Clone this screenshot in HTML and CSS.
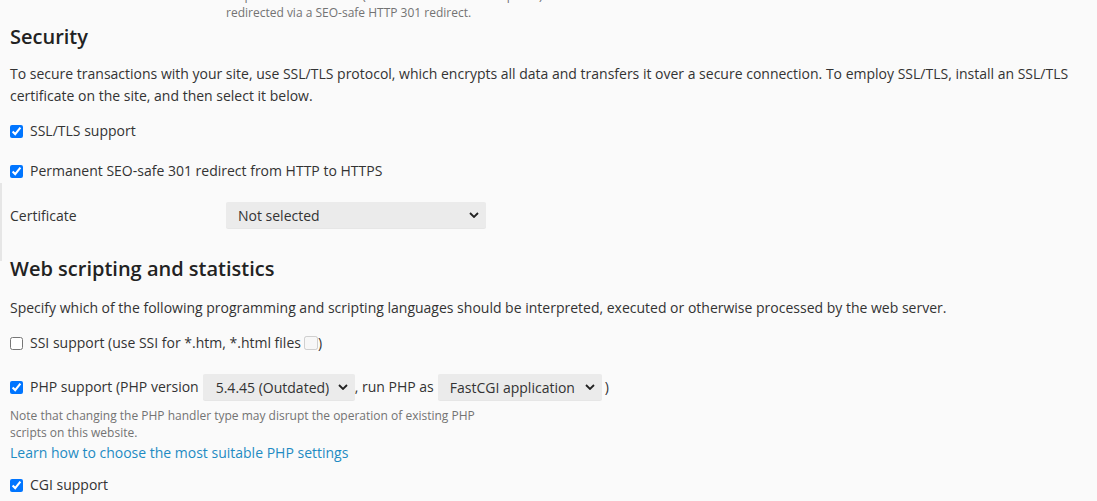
FILE: index.html
```html
<!DOCTYPE html>
<html lang="en">
<head>
  <meta charset="UTF-8" />
  <meta name="viewport" content="width=device-width, initial-scale=1.0"/>
  <title>Hosting settings</title>
  <link rel="stylesheet" href="styles.css">
</head>
<body>
  <div class="page">
    <div class="row-hint">
      <div class="field-hint top-hint">Requests to the domain (with or without the www prefix)<br>redirected via a SEO-safe HTTP 301 redirect.</div>
    </div>

    <section class="block security">
      <h2>Security</h2>
      <p class="intro">To secure transactions with your site, use SSL/TLS protocol, which encrypts all data and transfers it over a secure connection. To employ SSL/TLS, install an SSL/TLS certificate on the site, and then select it below.</p>

      <label class="check ssl-row"><input type="checkbox" checked> SSL/TLS support</label>
      <label class="check redirect-row"><input type="checkbox" checked> Permanent SEO-safe 301 redirect from HTTP to HTTPS</label>

      <div class="form-row cert-row">
        <span class="form-label">Certificate</span>
        <select class="sel cert-select">
          <option>Not selected</option>
        </select>
      </div>
    </section>

    <section class="block scripting">
      <h2>Web scripting and statistics</h2>
      <p class="intro single">Specify which of the following programming and scripting languages should be interpreted, executed or otherwise processed by the web server.</p>

      <label class="check ssi-row"><input type="checkbox"> SSI support (use SSI for *.htm, *.html files <input type="checkbox" class="tiny" disabled> )</label>

      <div class="check php-row">
        <input type="checkbox" checked>
        <span>PHP support (PHP version</span>
        <select class="sel php-version">
          <option>5.4.45 (Outdated)</option>
        </select>
        <span class="tight">, run PHP as</span>
        <select class="sel php-handler">
          <option>FastCGI application</option>
        </select>
        <span>)</span>
      </div>
      <div class="field-hint php-hint">Note that changing the PHP handler type may disrupt the operation of existing PHP<br>scripts on this website.</div>
      <a class="help-link" href="#">Learn how to choose the most suitable PHP settings</a>

      <label class="check cgi-row"><input type="checkbox" checked> CGI support</label>
    </section>
  </div>
</body>
</html>
```

FILE: styles.css
```css
body {
  font-family: 'Open Sans', 'Liberation Sans', sans-serif;
  margin: 0;
  background: #fafafa;
  color: #333;
  font-size: 14px;
  overflow: hidden;
}
.page {
  padding: 0 10px;
}
.row-hint {
  padding-left: 216px;
  margin-top: -13px;
}
.field-hint {
  font-size: 12px;
  line-height: 17px;
  color: #737373;
}
h2 {
  font-size: 20px;
  font-weight: 600;
  line-height: 24px;
  color: #222;
  margin: 0;
}
.security {
  margin-top: 4px;
}
.intro {
  line-height: 22px;
  margin: 14px 0 0;
}
.check {
  display: flex;
  align-items: center;
  line-height: 20px;
}
.check input {
  width: 13px;
  height: 13px;
  margin: 0 7px 0 0;
  accent-color: #0075ff;
}
.check input.tiny {
  margin: 0 0 0 3px;
  width: 14px;
  height: 14px;
}
.ssl-row { margin-top: 14px; }
.redirect-row { margin-top: 20px; }
.form-row {
  display: flex;
  align-items: center;
}
.form-label {
  width: 216px;
}
.cert-row {
  margin-top: 21px;
  position: relative;
}
.cert-row::before {
  content: "";
  position: absolute;
  left: -10px;
  top: -19px;
  width: 2px;
  height: 78px;
  background: #e6e6e6;
}
.sel {
  appearance: none;
  -webkit-appearance: none;
  font-family: inherit;
  font-size: 14px;
  color: #333;
  height: 26px;
  border: none;
  border-radius: 2px;
  background: #ebebeb url("data:image/svg+xml;utf8,<svg xmlns='http://www.w3.org/2000/svg' width='10' height='6' viewBox='0 0 10 6'><path d='M1 1l4 4 4-4' fill='none' stroke='%23222' stroke-width='1.8'/></svg>") no-repeat right 7px center;
  padding: 0 26px 0 12px;
  box-shadow: 0 1px 0 rgba(0, 0, 0, 0.08);
}
.cert-select { width: 260px; }
.scripting { margin-top: 29px; }
.intro.single { margin-top: 16px; }
.ssi-row { margin-top: 14px; }
.php-row { margin-top: 21px; }
.php-row span { margin-right: 4px; }
.php-row span.tight { margin-left: 0; margin-right: 4px; }
.php-version { width: 152px; padding-left: 13px; }
.php-handler { width: 164px; padding-left: 12px; margin-right: 3px; }
.php-row span:last-child { margin: 0; }
.php-hint { margin-top: 7px; }
.help-link {
  display: block;
  margin-top: 2px;
  line-height: 20px;
  color: #1e8bc3;
  text-decoration: none;
}
.cgi-row { margin-top: 12px; }
```
